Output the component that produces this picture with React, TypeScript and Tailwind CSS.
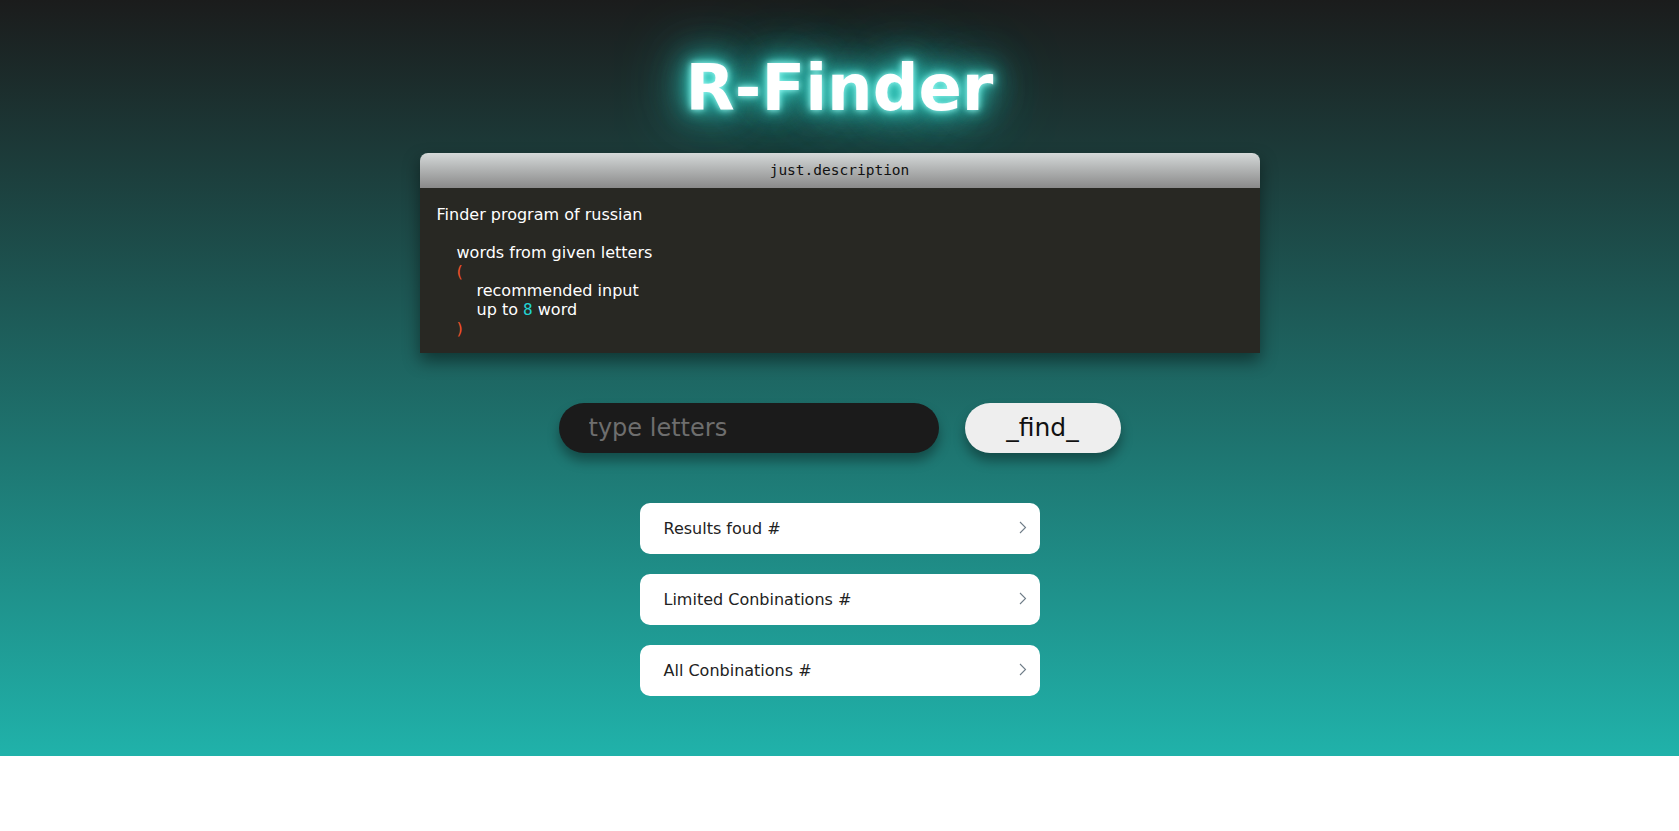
const results = ['Results foud #', 'Limited Conbinations #', 'All Conbinations #'];

function Chevron() {
  return (
    <svg width="8" height="13" viewBox="0 0 8 13" fill="none" className="shrink-0 -mt-[2px]">
      <path d="M1 1 L6.5 6.5 L1 12" stroke="#6f7d88" strokeWidth="1.1" />
    </svg>
  );
}

export default function App() {
  return (
    <div className="font-['DejaVu_Sans',Verdana,sans-serif]">
      <section className="h-[756px] bg-[linear-gradient(to_bottom,#1b1c1c,#20b2aa)] flex flex-col items-center pt-[51px]">
        <h1 className="text-[64px] font-bold leading-[74px] text-white [text-shadow:0_0_6px_#9ffaf5,0_0_14px_#40e0d0,0_0_28px_#34d0c7,0_0_45px_#2bbdb5,0_0_70px_#20b2aa]">
          R-Finder
        </h1>

        <div className="mt-[28px] w-[840px] shadow-[0_8px_16px_rgba(0,0,0,0.45)]">
          <div className="h-[35px] rounded-t-[8px] bg-gradient-to-b from-[#d5d9d9] to-[#8a8a8a] flex items-center justify-center">
            <span className="font-['DejaVu_Sans_Mono',monospace] text-[14.5px] text-[#111]">just.description</span>
          </div>
          <div className="bg-[#282823] text-white text-[16px] leading-[19px] pl-[17px] pt-[17px] pb-[15px]">
            <div>Finder program of russian</div>
            <div>&nbsp;</div>
            <div className="pl-5">words from given letters</div>
            <div className="pl-5 text-[#f0522a]">(</div>
            <div className="pl-10">recommended input</div>
            <div className="pl-10">
              up to <span className="font-['DejaVu_Sans_Mono',monospace] text-[#22d3d3]">8</span> word
            </div>
            <div className="pl-5 text-[#f0522a]">)</div>
          </div>
        </div>

        <div className="mt-[50px] flex gap-[26px]">
          <input
            placeholder="type letters"
            className="w-[380px] h-[50px] rounded-full bg-[#1b1b1b] px-[30px] text-[24px] text-white placeholder:text-[#6e6e6e] outline-none shadow-[0_8px_12px_rgba(0,0,0,0.35)]"
          />
          <button className="w-[156px] h-[50px] rounded-full bg-[#eeeeee] text-[25px] text-[#111] shadow-[0_8px_12px_rgba(0,0,0,0.35)]">
            _find_
          </button>
        </div>

        <div className="mt-[50px] flex flex-col gap-[20px]">
          {results.map((label) => (
            <div
              key={label}
              className="w-[400px] h-[51px] rounded-[10px] bg-white flex items-center justify-between pl-[24px] pr-[13px]"
            >
              <span className="text-[16px] text-[#222]">{label}</span>
              <Chevron />
            </div>
          ))}
        </div>
      </section>
    </div>
  );
}
